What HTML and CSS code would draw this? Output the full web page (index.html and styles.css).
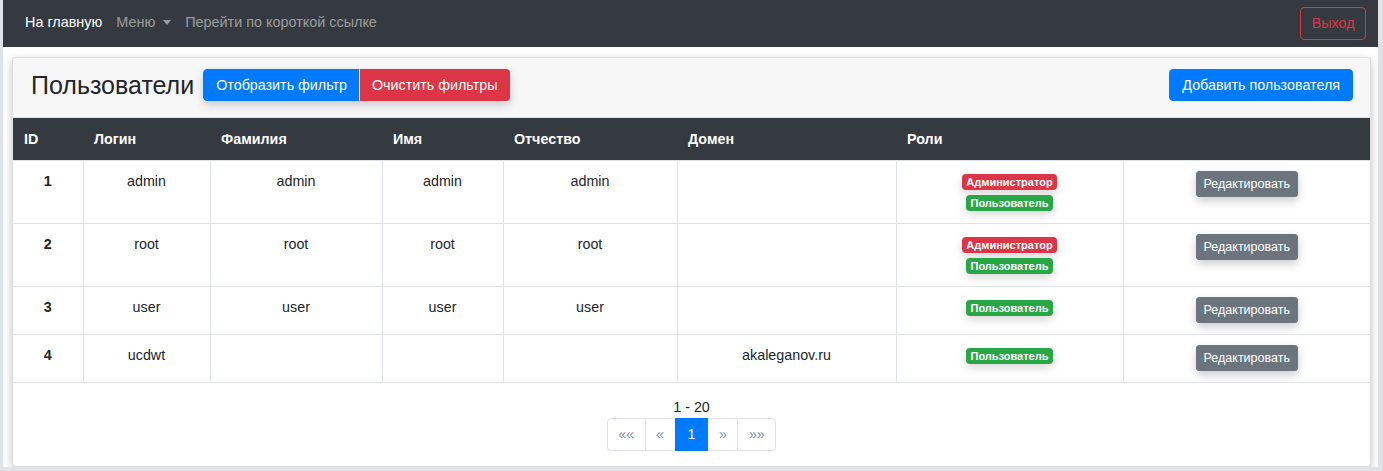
FILE: index.html
```html
<!DOCTYPE html>
<html lang="ru">
<head>
<meta charset="utf-8">
<title>Пользователи</title>
<link rel="stylesheet" href="styles.css">
</head>
<body>
<div class="wrapper">
  <nav class="navbar">
    <div class="nav-links">
      <a class="nav-link active" href="#">На главную</a>
      <a class="nav-link" href="#">Меню <span class="caret"></span></a>
      <a class="nav-link" href="#">Перейти по короткой ссылке</a>
    </div>
    <button class="btn btn-outline-danger">Выход</button>
  </nav>
  <main class="content">
    <section class="card">
      <header class="card-header">
        <h3 class="title">Пользователи</h3>
        <div class="btn-group">
          <button class="btn btn-primary btn-left">Отобразить фильтр</button>
          <button class="btn btn-danger btn-right">Очистить фильтры</button>
        </div>
        <button class="btn btn-primary btn-add">Добавить пользователя</button>
      </header>
      <table class="table">
        <colgroup>
          <col style="width:70px"><col style="width:127px"><col style="width:172px"><col style="width:121px"><col style="width:174px"><col style="width:219px"><col style="width:227px"><col>
        </colgroup>
        <thead>
          <tr><th>ID</th><th>Логин</th><th>Фамилия</th><th>Имя</th><th>Отчество</th><th>Домен</th><th>Роли</th><th></th></tr>
        </thead>
        <tbody>
          <tr>
            <td class="id">1</td><td>admin</td><td>admin</td><td>admin</td><td>admin</td><td></td>
            <td class="roles"><div class="badges"><span class="badge badge-danger">Администратор</span><span class="badge badge-success">Пользователь</span></div></td>
            <td class="actions"><button class="btn btn-sm btn-secondary">Редактировать</button></td>
          </tr>
          <tr>
            <td class="id">2</td><td>root</td><td>root</td><td>root</td><td>root</td><td></td>
            <td class="roles"><div class="badges"><span class="badge badge-danger">Администратор</span><span class="badge badge-success">Пользователь</span></div></td>
            <td class="actions"><button class="btn btn-sm btn-secondary">Редактировать</button></td>
          </tr>
          <tr>
            <td class="id">3</td><td>user</td><td>user</td><td>user</td><td>user</td><td></td>
            <td class="roles"><div class="badges"><span class="badge badge-success">Пользователь</span></div></td>
            <td class="actions"><button class="btn btn-sm btn-secondary">Редактировать</button></td>
          </tr>
          <tr>
            <td class="id">4</td><td>ucdwt</td><td></td><td></td><td></td><td>akaleganov.ru</td>
            <td class="roles"><div class="badges"><span class="badge badge-success">Пользователь</span></div></td>
            <td class="actions"><button class="btn btn-sm btn-secondary">Редактировать</button></td>
          </tr>
        </tbody>
      </table>
      <footer class="pager">
        <div class="range">1 - 20</div>
        <ul class="pagination">
          <li class="page-item disabled"><span>««</span></li>
          <li class="page-item disabled"><span>«</span></li>
          <li class="page-item active"><span>1</span></li>
          <li class="page-item disabled"><span>»</span></li>
          <li class="page-item disabled"><span>»»</span></li>
        </ul>
      </footer>
    </section>
  </main>
</div>
</body>
</html>
```

FILE: styles.css
```css
* { box-sizing: border-box; }
html, body { margin: 0; padding: 0; }
body {
  background: #dfe2e6;
  font-family: "Liberation Sans", Arial, sans-serif;
  font-size: 14.3px;
  line-height: 20px;
  color: #212529;
}
.wrapper {
  margin: 0 5px 0 3px;
  background: #fff;
}
.navbar {
  height: 47px;
  background: #343a40;
  display: flex;
  align-items: center;
  justify-content: space-between;
  padding: 0 12px 0 15px;
}
.nav-links { display: flex; align-items: center; margin-top: -3px; font-size: 14.4px; }
.nav-link {
  color: rgba(255,255,255,.5);
  text-decoration: none;
  padding: 0 7px;
  display: flex;
  align-items: center;
}
.nav-link.active { color: #fff; }
.caret {
  display: inline-block;
  margin-left: 8px;
  border-top: 5px solid rgba(255,255,255,.5);
  border-left: 4.5px solid transparent;
  border-right: 4.5px solid transparent;
}
.btn {
  font-family: inherit;
  font-size: 14.3px;
  line-height: 20px;
  padding: 5px 12px;
  border: 1px solid transparent;
  border-radius: 4px;
  cursor: pointer;
}
.btn-outline-danger {
  color: #dc3545;
  background: transparent;
  border-color: #dc3545;
  padding: 5px 10.5px;
  line-height: 21px;
  margin-top: -1px;
}
.btn-primary { background: #007bff; border-color: #007bff; color: #fff; }
.btn-danger { background: #dc3545; border-color: #dc3545; color: #fff; }
.btn-secondary { background: #6c757d; border-color: #6c757d; color: #fff; }
.content {
  padding: 10px 7px 0 9px;
}
.card {
  border: 1px solid rgba(0,0,0,.125);
  border-radius: 4px;
  background: #fff;
  box-shadow: 0 3px 8px rgba(0,0,0,.25);
  overflow: hidden;
}
.card-header {
  background: #f7f7f7;
  display: flex;
  align-items: center;
  padding: 11px 17px 16px 18px;
}
.title {
  margin: 0 9px 0 0;
  font-size: 25px;
  font-weight: 400;
  line-height: 32px;
}
.btn-group {
  display: flex;
  box-shadow: 0 4px 10px rgba(0,0,0,.18);
  border-radius: 4px;
}
.btn-left { border-radius: 4px 0 0 4px; }
.btn-right { border-radius: 0 4px 4px 0; margin-left: -1px; border-left-color: #fff; }
.btn-add { margin-left: auto; }
.table {
  width: 100%;
  border-collapse: collapse;
  table-layout: fixed;
}
.table th {
  background: #343a40;
  color: #fff;
  text-align: left;
  font-weight: 700;
  padding: 11px 11px 11px;
  line-height: 20px;
  border-top: 1px solid #dee2e6;
}
.table td {
  text-align: center;
  vertical-align: top;
  padding: 10px 11px 8px;
  border: 1px solid #dee2e6;
}
.table td:first-child { border-left: 0; }
.table td:last-child { border-right: 0; }
.table td.id { font-weight: 700; }
.table td.roles { padding-top: 13px; padding-bottom: 12px; }
.table td.actions { padding-top: 10px; padding-bottom: 11px; }
.badges {
  display: flex;
  flex-direction: column;
  align-items: center;
  gap: 5px;
}
.badge {
  display: inline-block;
  font-size: 11px;
  font-weight: 700;
  line-height: 12px;
  padding: 2px 4px;
  border-radius: 4px;
  color: #fff;
  box-shadow: 0 4px 10px rgba(0,0,0,.15);
}
.badge-danger { background: #dc3545; }
.badge-success { background: #28a745; }
.btn-sm {
  font-size: 12.5px;
  line-height: 20px;
  padding: 2px 7px;
  border-radius: 3px;
  box-shadow: 0 4px 10px rgba(0,0,0,.2);
}
.pager {
  padding: 14px 0 15px;
  display: flex;
  flex-direction: column;
  align-items: center;
}
.range { line-height: 21px; }
.pagination {
  list-style: none;
  margin: 0;
  padding: 0;
  display: flex;
}
.page-item span {
  display: block;
  padding: 5px 10.5px;
  border: 1px solid #dee2e6;
  margin-left: -1px;
  color: #7d8ea5;
  background: #fff;
  line-height: 21px;
}
.page-item:first-child span { margin-left: 0; border-radius: 4px 0 0 4px; }
.page-item:last-child span { border-radius: 0 4px 4px 0; }
.page-item.active span {
  background: #007bff;
  border-color: #007bff;
  color: #fff;
  position: relative;
  padding: 5px 12px;
}
```
